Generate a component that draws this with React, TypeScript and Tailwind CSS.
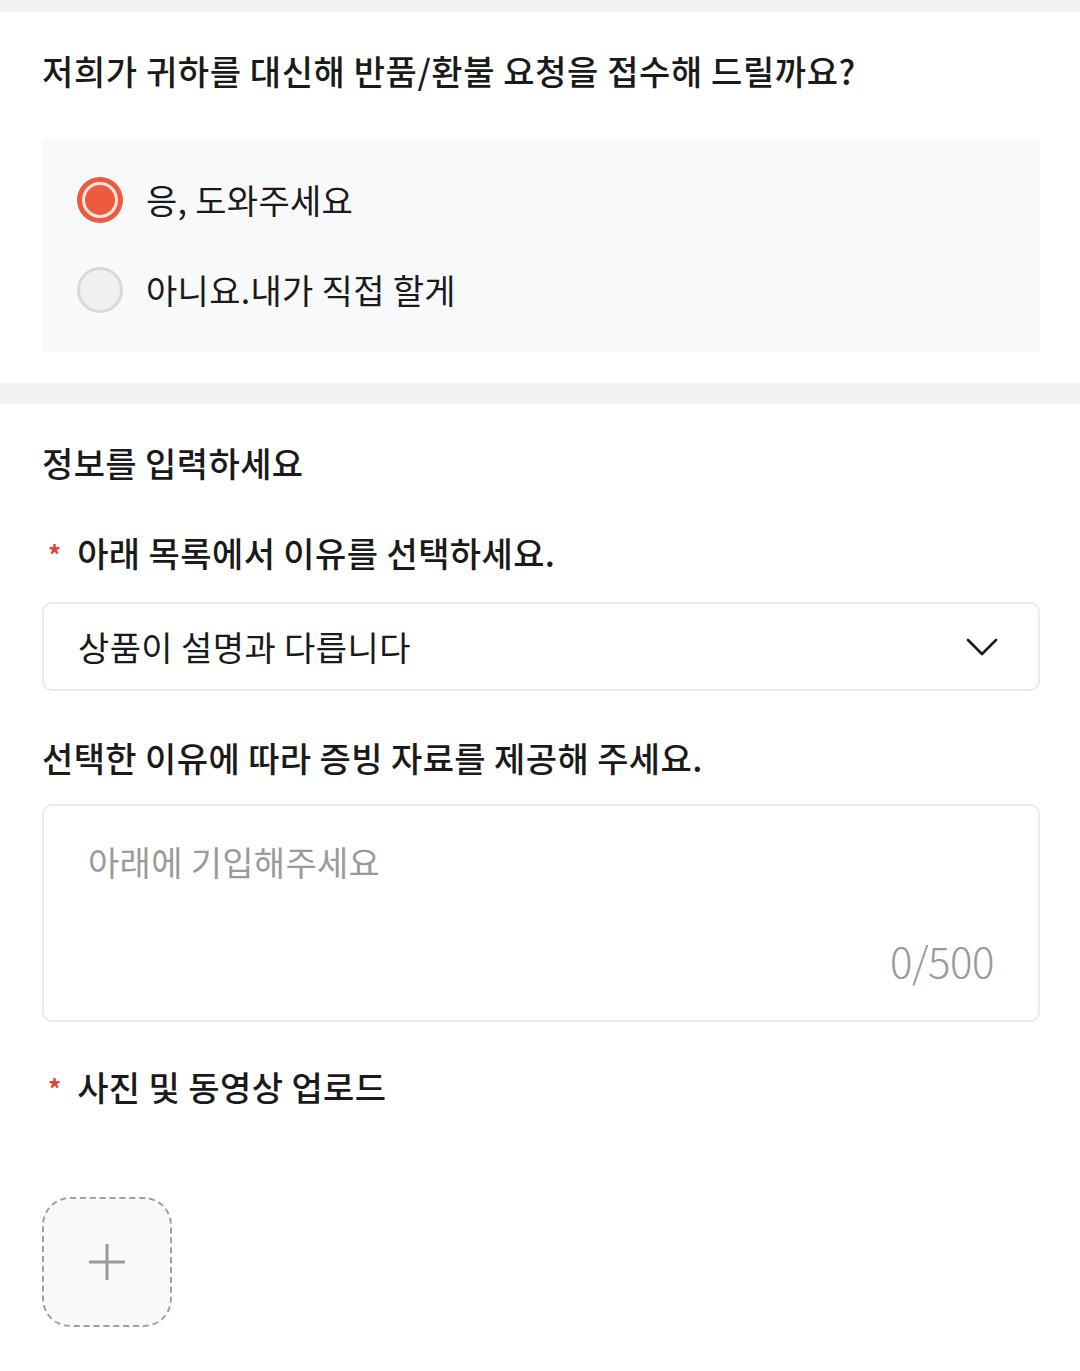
import { useState } from 'react';

const font = { fontFamily: '"Noto Sans CJK KR", "Noto Sans", sans-serif' };

const Radio = ({ checked }: { checked: boolean }) =>
  checked ? (
    <span className="flex h-[46px] w-[46px] items-center justify-center rounded-full bg-[#ee5a3e]">
      <span className="flex h-[36px] w-[36px] items-center justify-center rounded-full bg-[#fde6e1]">
        <span className="h-[30px] w-[30px] rounded-full bg-[#ee5a3e]" />
      </span>
    </span>
  ) : (
    <span className="h-[46px] w-[46px] rounded-full border-[3px] border-[#d9d9db] bg-[#f0f0f0]" />
  );

export default function App() {
  const [help, setHelp] = useState(true);
  const [text, setText] = useState('');

  return (
    <div className="min-h-[1371px] bg-white text-[#1a1a1a]" style={font}>
      <div className="h-[12px] bg-[#f1f2f4]" />

      <section className="pl-[42px] pr-[40px] pt-[35px] pb-[32px]">
        <h2 className="text-[34px] font-medium leading-[48px] tracking-[0.6px]">
          저희가 귀하를 대신해 반품/환불 요청을 접수해 드릴까요?
        </h2>
        <div className="mt-[44px] flex flex-col gap-[44px] bg-[#f8f9fb] px-[35px] py-[38px]">
          <button className="flex items-center gap-[23px] text-left" onClick={() => setHelp(true)}>
            <Radio checked={help} />
            <span className="text-[34px] leading-[46px] tracking-[0.3px]">응, 도와주세요</span>
          </button>
          <button className="flex items-center gap-[23px] text-left" onClick={() => setHelp(false)}>
            <Radio checked={!help} />
            <span className="text-[34px] leading-[46px] tracking-[0.3px]">아니요.내가 직접 할게</span>
          </button>
        </div>
      </section>

      <div className="h-[21px] bg-[#f1f2f4]" />

      <section className="pl-[42px] pr-[40px] pt-[35px]">
        <h2 className="text-[34px] font-medium leading-[48px] tracking-[0.4px]">정보를 입력하세요</h2>

        <div className="mt-[42px] flex items-center gap-[16px] pl-[6px]">
          <span className="text-[26px] font-bold text-[#e0442c]">*</span>
          <span className="text-[34px] font-medium leading-[48px] tracking-[0.4px]">아래 목록에서 이유를 선택하세요.</span>
        </div>

        <div className="mt-[25px] flex h-[89px] items-center justify-between rounded-[10px] border-2 border-[#ebebeb] pl-[34px] pr-[40px]">
          <span className="text-[34px] leading-[46px] tracking-[0.4px]">상품이 설명과 다릅니다</span>
          <svg width="32" height="20" viewBox="0 0 32 20" fill="none">
            <path d="M2 3l14 14L30 3" stroke="#1a1a1a" strokeWidth="2.6" strokeLinecap="round" strokeLinejoin="round" />
          </svg>
        </div>

        <h3 className="mt-[43px] text-[34px] font-medium leading-[48px] tracking-[0.4px]">
          선택한 이유에 따라 증빙 자료를 제공해 주세요.
        </h3>

        <div className="mt-[22px] flex h-[218px] flex-col rounded-[10px] border-2 border-[#ebebeb] pl-[44px] pr-[44px] pt-[33px] pb-[38px]">
          <textarea
            value={text}
            onChange={(e) => setText(e.target.value.slice(0, 500))}
            placeholder="아래에 기입해주세요"
            className="flex-1 resize-none bg-transparent text-[34px] leading-[46px] tracking-[0.3px] text-[#1a1a1a] outline-none placeholder:text-[#9a9a9a]"
            style={font}
          />
          <div className="text-right text-[42px] font-light leading-[44px] tracking-[-0.5px] text-[#9a9a9a]">{text.length}/500</div>
        </div>

        <div className="mt-[41px] flex items-center gap-[16px] pl-[6px]">
          <span className="text-[26px] font-bold text-[#e0442c]">*</span>
          <span className="text-[34px] font-medium leading-[48px] tracking-[0.4px]">사진 및 동영상 업로드</span>
        </div>

        <button className="mt-[86px] flex h-[130px] w-[130px] items-center justify-center rounded-[28px] border-2 border-dashed border-[#a0a0a0] bg-[#f9f9f9]">
          <svg width="40" height="40" viewBox="0 0 40 40">
            <path d="M20 2v36M2 20h36" stroke="#9a9a9a" strokeWidth="3" />
          </svg>
        </button>
      </section>
    </div>
  );
}
